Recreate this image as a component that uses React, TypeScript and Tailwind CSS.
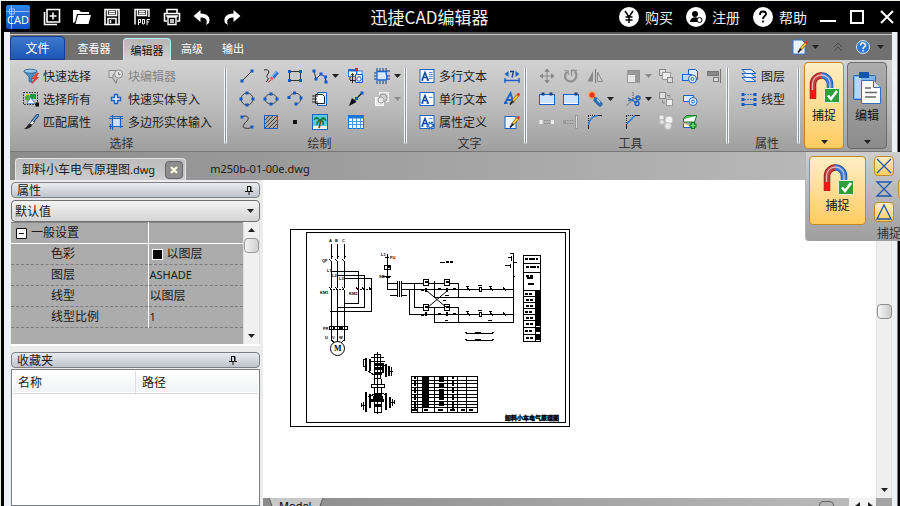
import type { ReactNode } from "react";

const BLUE = "#1c62c4";

const Svg = ({ children, size = 16 }: { children: ReactNode; size?: number }) => (
  <svg width={size} height={size} viewBox="0 0 16 16" fill="none" className="shrink-0">
    {children}
  </svg>
);

// small square grips used on most of the drawing icons
const Grips = ({ at, color = "#1559c8" }: { at: number[][]; color?: string }) => (
  <>
    {at.map(([x, y]) => (
      <rect key={`${x}-${y}`} x={x - 1.5} y={y - 1.5} width="3" height="3" fill={color} />
    ))}
  </>
);

const Pencil = () => (
  <>
    <path d="M14.5 3.5 8 11" stroke="#a8701a" strokeWidth="3" />
    <path d="M14.5 3.5 8 11" stroke="#ffd23c" strokeWidth="1.6" />
    <path d="M9.2 9.6 6 13.5" stroke="#222" strokeWidth="1.8" />
    <path d="m13.5 4.6 1.8-2" stroke="#d33" strokeWidth="2.4" />
  </>
);

const TextPage = ({ lines }: { lines: number[] }) => (
  <>
    <rect x="1" y="1.5" width="14" height="13" fill="#f6faff" stroke={BLUE} />
    <path d="M3 12 6 4.5 9 12M4 9.5h4M2.4 12h2M7.6 12h2.4" stroke="#1247a0" strokeWidth="1.5" />
    {lines.map((y) => (
      <path key={y} d={`M10 ${y}h3.5`} stroke="#4b8bdc" />
    ))}
  </>
);

const icons: Record<string, ReactNode> = {
  quickSelect: (
    <>
      <path d="M1 3.5 6 9v4.5l3 1V9l5-5.5z" fill="#4f8fc4" stroke="#215a8e" strokeWidth=".7" />
      <ellipse cx="7.5" cy="3.2" rx="6.5" ry="2" fill="#9cc9ea" stroke="#215a8e" strokeWidth=".8" />
      <path d="m14 5-5 5.5h2.5L9 15.5l6.5-6H13l2.5-4.5z" fill="#f2453a" stroke="#b61c16" strokeWidth=".5" />
    </>
  ),
  selectAll: (
    <>
      <rect x=".5" y="1.5" width="14" height="12" stroke="#222" strokeDasharray="1.5 1.2" />
      <rect x="2" y="3" width="7" height="7" fill="#ffd84a" />
      <rect x="7" y="3" width="6" height="5" fill="#1f9a3d" />
      <circle cx="5" cy="7" r="3" fill="#49a84a" />
      <path d="m4 12.5 3.500-6 4.500 6z" fill="#f2f8ff" stroke="#3b7bc8" strokeWidth=".7" />
      <rect x="12.5" y="11.5" width="3.5" height="4" fill="#111" />
    </>
  ),
  match: (
    <>
      <path d="m14.5 1.5-5 6" stroke="#12386c" strokeWidth="3.2" strokeLinecap="round" />
      <path d="m15 1-5.5 6.5" stroke="#7fb0e6" strokeWidth="1.2" />
      <path d="m9.5 6.5 2 2L9 11 6.500 9.500z" fill="#e9e9e9" stroke="#333" strokeWidth=".6" />
      <path d="M7 9.5c-2 0-2 3-6 5.500 4 0 7.500-1.500 8-4z" fill="#222" />
    </>
  ),
  blockEdit: (
    <>
      <path d="M1 2.5h9v4H5v3H1z" fill="#d8d8d8" stroke="#8c8c8c" />
      <circle cx="10.5" cy="6" r="4" fill="#e6e6e6" stroke="#8c8c8c" />
      <path d="m4 9 4 6 1.5-4M10.5 4v2.5h2" stroke="#8c8c8c" strokeWidth="1.3" />
    </>
  ),
  plus: <path d="M6.5 3.500h3v3h3v3h-3v3h-3v-3h-3v-3h3z" fill="#eaf3ff" stroke={BLUE} strokeWidth="1.4" />,
  polyIn: (
    <>
      <rect x="4.5" y="4.5" width="8" height="8" fill="#cfe0f8" />
      <path d="M1 4.500h14M1 12.500h14M4.500 1v15M12.500 2v12M2 2.500h13M2.500 10v5" stroke={BLUE} strokeWidth="1.2" />
    </>
  ),
  line: (
    <>
      <path d="M3 13 13 3" stroke="#333" />
      <Grips at={[[3, 13], [13, 3]]} />
    </>
  ),
  sketch: (
    <>
      <path d="M1 2c4-1 6 1 4 4s-1 3 0 4-1 3-2 4" stroke="#222" />
      <path d="m14.5 4-4.500 5.500" stroke="#2a76d8" strokeWidth="3.6" />
      <path d="M13.500 3.500 9 9" stroke="#9ccaff" />
      <path d="m9.5 9.500-1.500 2" stroke="#e55" strokeWidth="3" />
      <path d="M5 14.500 8 12" stroke="#a33" />
    </>
  ),
  rect: (
    <>
      <rect x="2.5" y="3.5" width="11" height="9" stroke="#333" />
      <Grips at={[[2.5, 3.5], [13.5, 3.5], [2.5, 12.5], [13.5, 12.5]]} />
    </>
  ),
  polyline: (
    <>
      <path d="m2 3 2 8 5-5 4 3 1 5" stroke="#333" />
      <Grips at={[[2, 3], [4, 11], [9, 6], [13.5, 9], [14, 14]]} />
    </>
  ),
  insert: (
    <>
      <rect x=".5" y="1.5" width="8" height="7" fill="#fff" stroke="#3a78c8" />
      <path d="M.5 2.500h8" stroke={BLUE} strokeWidth="2" />
      <rect x="9" y="3" width="5" height="4" fill="#fff" stroke="#3a78c8" />
      <rect x="7" y="0" width="3" height="3" fill="#d22" />
      <path d="M7.500 6.500h7v8h-7z" fill="#dcecff" stroke={BLUE} />
      <circle cx="11" cy="11" r="2.2" stroke={BLUE} fill="#fff" />
      <path d="M4.500 6v9M2 12.500h6M3 7.500l1.500-2 1.500 2M2 9v3" stroke="#222" />
    </>
  ),
  region: (
    <>
      <path d="M3 3.500h9.500c-2 3 2 3 0 8.500H3z" fill="#d9eaff" stroke={BLUE} strokeWidth="1.3" />
      <path d="M3 0v3M6 0v3M9 0v3M12 0v3M3 13v3M6 13v3M9 13v3M12 13v3M0 5h2.500M0 8h2.500M0 11h2.500M13 3h3M13 8h3M13 11h3" stroke="#123e80" />
    </>
  ),
  circle: (
    <>
      <circle cx="8" cy="8" r="6" stroke="#444" />
      <Grips at={[[8, 2], [8, 14], [2, 8], [14, 8]]} />
    </>
  ),
  ellipse: (
    <>
      <ellipse cx="8" cy="8" rx="6" ry="5" stroke="#444" />
      <Grips at={[[8, 3], [8, 13], [2, 8], [14, 8]]} />
    </>
  ),
  arc: (
    <>
      <path d="M2 7c1-6 11-7 12 0 0 4-3 6-5 6" stroke="#444" />
      <Grips at={[[2, 6.5], [7.5, 2], [14, 7], [9, 13]]} />
    </>
  ),
  wipeout: (
    <>
      <path d="M5.500 1.500h9v13h-9z" fill="#dcecff" stroke={BLUE} />
      <path d="M3.500 3.500h7l2 2v7h-9z" fill="#fff" stroke="#222" />
      <path d="M0 5h6M0 8h5M0 11h6" stroke="#222" />
    </>
  ),
  arrow: (
    <>
      <path d="M14 2 5 11" stroke="#222" strokeWidth="1.5" />
      <path d="m1 15 3-8 4.500 4z" fill="#111" />
      <Grips at={[[14, 2], [8.5, 7.5]]} />
    </>
  ),
  boundary: (
    <>
      <rect x="5.5" y="1.5" width="9" height="9" fill="#ddd" stroke="#eee" />
      <circle cx="9" cy="7" r="4" fill="#ccc" stroke="#999" />
      <rect x="1.5" y="6.5" width="8" height="8" fill="#e8e8e8" stroke="#fafafa" />
      <circle cx="7" cy="9" r="3" stroke="#999" />
    </>
  ),
  spline: (
    <>
      <path d="M3 3c5-3 8 1 5 4s-6 6-2 7 5 0 7-1" stroke="#333" />
      <Grips at={[[3, 3], [13, 13]]} />
    </>
  ),
  hatch: (
    <>
      <rect x="1.5" y="1.5" width="13" height="13" fill="#a8a8a8" stroke={BLUE} />
      <path d="M2 6 6 2M2 10l8-8M2 14 14 2M6 14l8-8M10 14l4-4" stroke="#444" />
    </>
  ),
  point: <rect x="6" y="6" width="4" height="4" fill="#111" />,
  image: (
    <>
      <rect x=".5" y=".5" width="15" height="15" fill="#5ccbe8" stroke={BLUE} />
      <path d="M1 12h14v3H1z" fill="#f2f4e0" />
      <path d="M8 6c1 3 0 5-1 8" stroke="#6b4518" strokeWidth="1.6" />
      <path d="M8 6C5 1 2 4 2 6c2-2 4-1 6 0-2 0-4 2-3 5 1-3 2-4 3-5 1 1 3 2 3 5 2-3 0-5-3-5 2-1 4-1 6 1 0-4-4-5-6-1z" fill="#14853a" stroke="#0d6a2b" strokeWidth=".6" />
    </>
  ),
  grid: (
    <>
      <rect x=".5" y="1.5" width="15" height="13" fill="#fff" stroke="#1c74d8" />
      <path d="M1 3h14" stroke="#1c74d8" strokeWidth="3" />
      <path d="M1 7.500h14M1 10.500h14M4.500 4v11M8.500 4v11M12.500 4v11" stroke="#4a94e4" />
    </>
  ),
  mtext: <TextPage lines={[4.5, 6.5, 8.5, 10.5]} />,
  stext: <TextPage lines={[6.5]} />,
  attr: (
    <>
      <TextPage lines={[4.5]} />
      <circle cx="11.5" cy="11.5" r="3" fill="#d9e9ff" stroke={BLUE} strokeWidth="2" strokeDasharray="1.6 .8" />
      <circle cx="11.5" cy="11.5" r="2" fill="#fff" stroke={BLUE} />
    </>
  ),
  dim: (
    <>
      <path d="M0 12.500h16M1 10v5M15 10v5" stroke={BLUE} strokeWidth="1.3" />
      <path d="M4.500 3 .5 6l4 3zM11.500 3l4 3-4 3z" fill={BLUE} />
      <path d="M6 3.500h3.500L8 9.500" stroke="#123e80" strokeWidth="1.3" />
    </>
  ),
  textStyle: (
    <>
      <path d="M1 12 6.500 2l3 10M3 9h5.500M0 12h3.500" stroke={BLUE} strokeWidth="1.8" />
      <Pencil />
    </>
  ),
  textEdit: (
    <>
      <rect x="1" y="2.5" width="11" height="12" fill="#eef5ff" stroke={BLUE} />
      <Pencil />
    </>
  ),
  move: (
    <path d="M8 1v14M1 8h14M8 1 6 3.500h4zM8 15l-2-2.500h4zM1 8l2.500-2v4zM15 8l-2.500-2v4z" stroke="#888" fill="#999" />
  ),
  rotate: (
    <>
      <path d="M4.500 3.500c-4 4-3 9 2.500 10 6 0 8-6 5-10" stroke="#909090" strokeWidth="2.2" />
      <path d="M8.500 8V2.500H14" stroke="#909090" strokeWidth="1.3" />
      <path d="M1 2.500h4.500V7" stroke="#a0a0a0" />
    </>
  ),
  mirror: (
    <>
      <path d="M6 3v10.500H.5z" fill="#888" />
      <path d="M10.500 4v9.500h5z" fill="#ccc" stroke="#888" />
      <path d="M8.500 1v14" stroke="#777" />
    </>
  ),
  scale: (
    <>
      <rect x="2.5" y="2.5" width="12" height="12" fill="#ccc" stroke="#777" strokeDasharray="1 1" />
      <path d="M3 2h12v12h-4V6H3z" fill="#8c8c8c" opacity=".8" />
      <rect x="2.5" y="6.5" width="8" height="8" fill="#e4e4e4" stroke="#999" />
    </>
  ),
  copyGray: (
    <>
      <rect x="1.5" y="1.5" width="6" height="6" fill="#ddd" stroke="#888" />
      <rect x="4.5" y="4.500" width="8" height="7" fill="#eee" stroke="#999" />
      <rect x="9.5" y="9.500" width="5" height="5" fill="#ddd" stroke="#888" />
    </>
  ),
  union: (
    <>
      <path d="M6.500 1.500h7l2 2v8h-9z" fill="#dcecff" stroke={BLUE} />
      <rect x=".5" y="6.5" width="9" height="6" fill="#b9d5f8" stroke={BLUE} />
      <circle cx="10.5" cy="11" r="4" fill="#eaf3ff" stroke={BLUE} />
      <circle cx="10.5" cy="11" r="1.500" stroke={BLUE} />
    </>
  ),
  align: (
    <>
      <path d="M14.500 1v14" stroke="#777" />
      <rect x="1.5" y="3.5" width="11" height="4" fill="#888" stroke="#777" />
      <rect x="7.5" y="9.5" width="5" height="4" fill="#ddd" stroke="#777" />
    </>
  ),
  stretch: (
    <>
      <rect x=".5" y="3.5" width="15" height="10" fill="#cfe3ff" stroke={BLUE} />
      <path d="M1 12.500h14" stroke="#fff" />
      <Grips at={[[4, 3], [12, 3]]} color="#123e80" />
    </>
  ),
  stretch2: (
    <>
      <rect x=".5" y="3.5" width="15" height="10" fill="#cfe3ff" stroke={BLUE} />
      <path d="M1 12.500h14" stroke="#fff" />
      <Grips at={[[13, 3]]} color="#123e80" />
    </>
  ),
  explode: (
    <>
      <circle cx="5" cy="4" r="4" fill="#f3a060" />
      <circle cx="5" cy="4" r="2.5" fill="#e8301c" />
      <path d="m6 5 3 3" stroke="#d22" />
      <path d="m9 9 4 4" stroke="#2b6cae" strokeWidth="5" strokeLinecap="round" />
      <path d="m10 8 3 3.500" stroke="#a9d6f5" strokeWidth="1.5" />
    </>
  ),
  trim: (
    <>
      <path d="M8 1v8L1 15" stroke="#555" strokeDasharray="1.5 1" />
      <path d="m3 7 9 5M3 10l11-4" stroke="#2c62ae" strokeWidth="1.3" />
      <circle cx="13" cy="7" r="2" stroke={BLUE} strokeWidth="1.4" />
      <circle cx="12" cy="12.5" r="2" stroke={BLUE} strokeWidth="1.4" />
    </>
  ),
  order: (
    <>
      <rect x="1.5" y="1.5" width="6" height="6" fill="#ddd" stroke="#888" />
      <rect x="8.5" y="8.5" width="6" height="6" fill="#eee" stroke="#999" />
      <path d="M9 4.500h3V7M4.500 9v3H7" stroke="#888" />
    </>
  ),
  subtract: (
    <>
      <path d="M1.500 4.500h10v6h-10z" fill="#dcecff" stroke={BLUE} />
      <circle cx="11" cy="10.5" r="4" fill="#eaf3ff" stroke={BLUE} />
      <circle cx="11" cy="10.5" r="1.500" stroke={BLUE} />
    </>
  ),
  breakOne: (
    <>
      <rect x=".5" y="6" width="3" height="4" fill="#eee" />
      <rect x="12" y="6" width="3" height="4" fill="#eee" />
      <path d="M5 6.500h6M5 9.500h6" stroke="#888" strokeDasharray="1.5 1" />
    </>
  ),
  extend: (
    <>
      <rect x="0" y="6" width="3" height="4" fill="#999" />
      <path d="M4 6.500h7M4 9.500h7" stroke="#888" strokeDasharray="1.5 1" />
      <rect x="12.5" y="1.5" width="2" height="13" fill="#ddd" stroke="#999" />
    </>
  ),
  fillet: (
    <>
      <path d="M1.500 15V2M1 1.500h14" stroke="#222" strokeDasharray="1 1" />
      <path d="M1.500 15v-4M11 1.500h4" stroke="#222" />
      <path d="M1.500 11c1-6 4-9 9.500-9.500" stroke="#2b78d8" strokeWidth="1.4" />
    </>
  ),
  chamfer: (
    <>
      <path d="M1.500 15V2M1 1.500h14" stroke="#222" strokeDasharray="1 1" />
      <path d="M1.500 15v-5M9 1.500h6" stroke="#222" />
      <path d="M1.500 10 10 1.500" stroke="#2b78d8" strokeWidth="1.4" />
    </>
  ),
  group: (
    <>
      <rect x="1" y="1" width="5" height="5" rx="1" fill="#eee" stroke="#aaa" />
      <circle cx="11" cy="6" r="4" fill="#f2f2f2" stroke="#bbb" />
      <circle cx="10" cy="12" r="3.5" fill="#e5e5e5" stroke="#bbb" />
      <circle cx="4" cy="8" r="2.5" fill="#ddd" stroke="#bbb" />
    </>
  ),
  addLayer: (
    <>
      <path d="m1.500 4.500 3-3h10l-2 3z" fill="#4fbf5c" stroke="#157a2b" />
      <path d="M1.500 5v3h11l2-6" fill="#fff" stroke="#157a2b" />
      <path d="M1.500 9.500v4h10" fill="#fff" stroke="#1c62c4" />
      <path d="M11 8v7M7.500 11.500h7" stroke="#0c7a22" strokeWidth="4" />
      <path d="M11 9v5M8.500 11.500h5" stroke="#6ee07c" strokeWidth="1.6" />
    </>
  ),
  layers: (
    <>
      {[10, 6, 2].map((y) => (
        <path key={y} d={`M1 ${y - 0.5}h9l5 4H5z`} fill="#e4f0ff" stroke={BLUE} />
      ))}
    </>
  ),
  lineType: (
    <>
      <path d="M1 3.500h14M1 8.500h14" stroke={BLUE} strokeDasharray="1.5 1.2" />
      <path d="M1 13.500h14" stroke={BLUE} />
      <Grips at={[[2, 3.5], [14, 3.5], [2, 8.5], [14, 8.5], [2, 13.5], [14, 13.5]]} />
    </>
  ),
};

const Caret = ({ muted = false }: { muted?: boolean }) => (
  <svg width="7" height="4" viewBox="0 0 7 4" className="shrink-0">
    <path d="M0 0h7L3.500 4z" fill={muted ? "#8a8a8a" : "#222"} />
  </svg>
);

const ToolButton = ({ icon, label, disabled }: { icon: string; label: string; disabled?: boolean }) => (
  <button
    disabled={disabled}
    className="flex h-[23px] items-center gap-1 whitespace-nowrap text-xs leading-4 text-[#1d1d1d] disabled:text-[#858585]"
  >
    <Svg>{icons[icon]}</Svg>
    {label}
  </button>
);

const IconButton = ({ icon, caret, muted }: { icon: string; caret?: boolean; muted?: boolean }) => (
  <button aria-label={icon} className="flex h-[23px] items-center gap-1 pl-1">
    <Svg>{icons[icon]}</Svg>
    {caret && <Caret muted={muted} />}
  </button>
);

const Group = ({ title, children }: { title: string; children: ReactNode }) => (
  <section className="flex shrink-0">
    <div className="flex flex-col">
      <div className="pt-1">{children}</div>
      <h2 className="pl-2 text-center text-xs leading-5 text-[#333]">{title}</h2>
    </div>
    <div className="my-[7px] w-[3px] rounded border-x border-[#f2f4f8] bg-[#8f949c]" />
  </section>
);

const Magnet = () => (
  <svg width="32" height="32" viewBox="0 0 32 32" fill="none">
    <path d="M5 28V13a8.500 8.500 0 0 1 8.500-8.500" stroke="#8c1414" strokeWidth="6.500" />
    <path d="M13 4.500a8.500 8.500 0 0 1 9 8.500v7" stroke="#1c4f9c" strokeWidth="6.500" />
    <path d="M5 27.500V13a8.500 8.500 0 0 1 8.500-8.500" stroke="#c43c3c" strokeWidth="5" />
    <path d="M13 4.500a8.500 8.500 0 0 1 9 8.500v7" stroke="#3f7fd6" strokeWidth="5" />
    <path d="M5 19v8.500" stroke="#ff1414" strokeWidth="5" />
    <path d="M4.500 19v-6a9 9 0 0 1 9-9 8.500 8.500 0 0 1 8.500 9v4" stroke="#f3d6da" strokeWidth="1.300" opacity=".8" />
    <rect x="16.5" y="17.5" width="15" height="14" rx="1" fill="#2f9e3a" stroke="#e4f3dc" />
    <path d="m20 24.500 3 3.500 6-8" stroke="#fff" strokeWidth="2.6" />
  </svg>
);

const Clipboard = () => (
  <svg width="30" height="34" viewBox="0 0 30 34" fill="none">
    <rect x="1.5" y="4.5" width="22" height="24" rx="1" fill="#7fb4ee" stroke="#2a64b4" />
    <path d="M3 6h6v21H3z" fill="#b4d6fa" />
    <rect x="7" y="1" width="10" height="6" fill="#1253b4" />
    <path d="M9.500 9.500h12l7 7v16h-19z" fill="#fff" stroke="#3a6eb4" />
    <path d="M21.500 9.500v7h7" fill="#d4e6fa" stroke="#3a6eb4" />
    <path d="M13 17h6M13 21.500h12M13 26h11" stroke="#666" strokeWidth="1.6" />
  </svg>
);

const quickActions: { name: string; icon: ReactNode }[] = [
  {
    name: "新建",
    icon: (
      <>
        <path d="M4 1.500h12.500V14H4z" stroke="#fff" strokeWidth="1.6" />
        <path d="M1.500 4v12.500H14M10 4.500v7M6.500 8h7" stroke="#fff" strokeWidth="1.6" />
      </>
    ),
  },
  {
    name: "打开",
    icon: <path d="M0 15V2h6l2 2h8v2H4L2 14zM5 7h13l-2.500 9h-13z" fill="#fff" />,
  },
  {
    name: "保存",
    icon: (
      <>
        <path d="M2 1.500h14v15H2z" stroke="#fff" strokeWidth="1.6" />
        <path d="M4.500 1v6.500h9V1M6 3.500h6M6 5.500h6M5 16v-5.500h8V16M7.500 12v3" stroke="#fff" strokeWidth="1.5" />
      </>
    ),
  },
  {
    name: "导出",
    icon: (
      <>
        <path d="M2 16.500v-15h14V9M4.500 2v5.500h9V2M6 3.500h6M6 5.500h6" stroke="#fff" strokeWidth="1.5" />
        <path d="M5.500 17v-5.500h2v3h-2M9.500 11.500V16H11l.5-1v-3.500zM14 17v-5.500h3M14 14h2" stroke="#fff" />
      </>
    ),
  },
  {
    name: "打印",
    icon: (
      <>
        <path d="M4 5V1.500h10V5M4 13H1.500V5.500h15V13H14" stroke="#fff" strokeWidth="1.6" />
        <path d="M5 9h8v7.500H5zM3 8h12M7 12h4M7 14h4" stroke="#fff" strokeWidth="1.4" />
      </>
    ),
  },
  { name: "撤销", icon: <path d="M7.500 2v3.500c7 0 10.500 4 8.500 9.500l-3 2c2-5 0-7.500-5.500-7.500V14L.5 8z" fill="#fff" /> },
  { name: "重做", icon: <path d="M10.500 2v3.500C3.500 5.500 0 9.500 2 15l3 2c-2-5 0-7.500 5.500-7.500V14l7-6z" fill="#fff" /> },
];

const accountLinks: { label: string; icon: ReactNode }[] = [
  { label: "购买", icon: <path d="m6 4 4 6 4-6M10 10v6M6.500 10h7M6.500 13h7" stroke="#000" strokeWidth="1.5" /> },
  {
    label: "注册",
    icon: (
      <>
        <circle cx="9" cy="7" r="3" fill="#000" />
        <path d="M4 15c0-6 9-6 9-2v2z" fill="#000" />
        <circle cx="13.5" cy="13" r="2.5" fill="#fff" stroke="#000" />
      </>
    ),
  },
  { label: "帮助", icon: <path d="M7 8c0-5 6-4 6-1 0 2-3 2-3 5M10 13.500v2" stroke="#000" strokeWidth="1.8" /> },
];

const TitleBar = () => (
  <header className="relative flex h-[31px] shrink-0 items-center justify-between bg-black pl-[5px] text-[#f2f2f2]">
    <div className="flex items-center">
      <svg width="24" height="24" viewBox="0 0 24 24" className="mr-[13px]">
        <defs>
          <linearGradient id="logo" x1="0" y1="0" x2="0" y2="1">
            <stop stopColor="#2b86ea" />
            <stop offset="1" stopColor="#1450c0" />
          </linearGradient>
        </defs>
        <rect width="24" height="24" rx="2" fill="url(#logo)" />
        <path d="M5.500 0v24M0 6.500h23M3.500 4h5v5h-5z" stroke="#a8d0ff" strokeWidth=".8" fill="none" />
        <text x="12" y="19" textAnchor="middle" fill="#fff" fontSize="11" fontFamily="Open Sans">CAD</text>
      </svg>
      <nav className="flex items-center gap-3">
        {quickActions.map((a) => (
          <button key={a.name} aria-label={a.name}>
            <svg width="18" height="18" viewBox="0 0 18 18" fill="none">{a.icon}</svg>
          </button>
        ))}
      </nav>
    </div>
    <h1 className="pointer-events-none absolute inset-x-0 mr-[42px] text-center text-[17px] leading-6">迅捷CAD编辑器</h1>
    <div className="flex items-center">
      {accountLinks.map((l) => (
        <a key={l.label} href="#" className="mr-[13px] flex items-center gap-1.5 text-sm leading-5">
          <svg width="20" height="20" viewBox="0 0 20 20" fill="none">
            <circle cx="10" cy="10" r="10" fill="#fff" />
            {l.icon}
          </svg>
          {l.label}
        </a>
      ))}
      <div className="flex items-center pr-1.5">
        <button aria-label="最小化" className="mr-3.5">
          <svg width="16" height="16"><path d="M0 11h16v2H0z" fill="#fff" /></svg>
        </button>
        <button aria-label="最大化" className="mr-4">
          <svg width="14" height="14"><path d="M1 1h12v12H1z" stroke="#fff" strokeWidth="2" fill="none" /></svg>
        </button>
        <button aria-label="关闭">
          <svg width="14" height="14"><path d="m1 1 12 12M13 1 1 13" stroke="#fff" strokeWidth="2" /></svg>
        </button>
      </div>
    </div>
  </header>
);

const MenuTabs = () => (
  <nav className="flex h-7 shrink-0 items-end border-t-2 border-[#555] bg-[#707070] text-[11px] leading-4 text-white shadow-[inset_0_1px_0_#c8c8c8]">
    <button className="h-6 w-[55px] rounded-t border border-[#173f8c] bg-linear-to-b from-[#3f78cc] to-[#1d56b4] text-xs">文件</button>
    <button className="h-6 w-[58px]">查看器</button>
    <button className="h-[22px] w-12 rounded-t-sm border border-b-0 border-[#b9f0f4] bg-linear-to-b from-[#b4b4b4] to-[#d2d2d2] text-[#111]">编辑器</button>
    <button className="h-6 w-[42px]">高级</button>
    <button className="h-6 w-10">输出</button>
    <div className="ml-auto flex h-[26px] items-center pr-2">
      <button aria-label="样式" className="mr-3.5 flex items-center gap-1">
        <Svg>
          <path d="M1 1h9l3 3v11H1z" fill="#e8f2ff" stroke="#3a78c8" />
          <Pencil />
        </Svg>
        <Caret />
      </button>
      <button aria-label="收起" className="mr-3">
        <svg width="10" height="10" fill="none"><path d="m1 5 4-4 4 4M1 9l4-4 4 4" stroke="#484848" /></svg>
      </button>
      <button aria-label="帮助" className="flex items-center gap-1.5">
        <Svg>
          <circle cx="8" cy="8" r="6.5" fill="#2d78d0" stroke="#d6e8ff" />
          <path d="M5.500 6.500c0-4 5-3 5 0 0 1.500-2.500 1.500-2.500 3.500M8 11v1.500" stroke="#fff" strokeWidth="1.5" />
        </Svg>
        <Caret />
      </button>
    </div>
  </nav>
);

const Ribbon = () => (
  <div className="flex h-[92px] shrink-0 overflow-hidden border-b border-[#777] bg-linear-to-b from-[#d2d2d2] via-[#bcbcbc] to-[#9f9f9f] pl-px">
    <Group title="选择">
      <div className="grid grid-cols-[85px_116px] pl-3">
        <ToolButton icon="quickSelect" label="快速选择" />
        <ToolButton icon="blockEdit" label="块编辑器" disabled />
        <ToolButton icon="selectAll" label="选择所有" />
        <ToolButton icon="plus" label="快速实体导入" />
        <ToolButton icon="match" label="匹配属性" />
        <ToolButton icon="polyIn" label="多边形实体输入" />
      </div>
    </Group>
    <Group title="绘制">
      <div className="grid grid-cols-[24px_24px_25px_36px_26px_34px] pl-2">
        <IconButton icon="line" />
        <IconButton icon="sketch" />
        <IconButton icon="rect" />
        <IconButton icon="polyline" caret />
        <IconButton icon="insert" />
        <IconButton icon="region" caret />
        <IconButton icon="circle" />
        <IconButton icon="ellipse" />
        <IconButton icon="arc" />
        <IconButton icon="wipeout" />
        <IconButton icon="arrow" />
        <IconButton icon="boundary" caret muted />
        <IconButton icon="spline" />
        <IconButton icon="hatch" />
        <IconButton icon="point" />
        <IconButton icon="image" />
        <IconButton icon="grid" />
      </div>
    </Group>
    <Group title="文字">
      <div className="grid grid-cols-[81px_24px] pl-3">
        <ToolButton icon="mtext" label="多行文本" />
        <IconButton icon="dim" />
        <ToolButton icon="stext" label="单行文本" />
        <IconButton icon="textStyle" />
        <ToolButton icon="attr" label="属性定义" />
        <IconButton icon="textEdit" />
      </div>
    </Group>
    <Group title="工具">
      <div className="grid grid-cols-[24px_24px_38px_33px_24px_24px_24px] pl-2">
        <IconButton icon="move" />
        <IconButton icon="rotate" />
        <IconButton icon="mirror" />
        <IconButton icon="scale" caret muted />
        <IconButton icon="copyGray" />
        <IconButton icon="union" />
        <IconButton icon="align" />
        <IconButton icon="stretch" />
        <IconButton icon="stretch2" />
        <IconButton icon="explode" caret />
        <IconButton icon="trim" caret />
        <IconButton icon="order" />
        <IconButton icon="subtract" />
        <span />
        <IconButton icon="breakOne" />
        <IconButton icon="extend" />
        <IconButton icon="fillet" />
        <IconButton icon="chamfer" />
        <IconButton icon="group" />
        <IconButton icon="addLayer" />
      </div>
    </Group>
    <Group title="属性">
      <div className="flex h-[69px] flex-col px-3">
        <ToolButton icon="layers" label="图层" />
        <ToolButton icon="lineType" label="线型" />
      </div>
    </Group>
    <div className="flex gap-[3px] py-0.5 pl-1 text-xs leading-4 text-[#111]">
      <button className="flex w-10 flex-col items-center rounded border border-[#c08a2c] bg-linear-to-b from-[#fdeec4] to-[#ffcb5e] pt-2 pb-1">
        <Magnet />
        <span className="mt-1">捕捉</span>
        <span className="mt-auto"><Caret /></span>
      </button>
      <button className="flex w-10 flex-col items-center rounded border border-[#6c6c6c] bg-linear-to-b from-[#adadad] to-[#8b8b8b] pt-2 pb-1">
        <Clipboard />
        <span className="mt-0.5">编辑</span>
        <span className="mt-auto"><Caret /></span>
      </button>
    </div>
  </div>
);

const snapModes = [
  { name: "交点", on: true, path: "M2 2l14 14M16 2 2 16" },
  { name: "最近点", on: false, path: "M2 2h14L2 16h14z" },
  { name: "中点", on: true, path: "M9 2 2 16h14z" },
];

const SnapMenu = () => (
  <div className="absolute top-[151px] right-0 w-[95px] overflow-hidden rounded-bl border-l border-[#b4b4b4] bg-linear-to-b from-[#cecece] to-[#9e9e9e] pt-1 pl-[3px] text-xs leading-4">
    <div className="flex gap-2">
      <button className="flex h-[69px] w-[57px] shrink-0 flex-col items-center rounded-sm border border-[#c08a2c] bg-linear-to-b from-[#fdeec4] to-[#ffcb5e] pt-1.5 text-[#111]">
        <Magnet />
        <span className="mt-0.5">捕捉</span>
      </button>
      <div className="grid h-[66px] shrink-0 grid-cols-[20px_20px] gap-x-1 gap-y-[3px]">
        {snapModes.map((m) => (
          <div key={m.name} className="contents">
            <button
              aria-label={m.name}
              className={
                m.on
                  ? "flex h-5 items-center justify-center rounded-sm border border-[#c08a2c] bg-linear-to-b from-[#fdeec4] to-[#ffcb5e]"
                  : "flex h-5 items-center justify-center"
              }
            >
              <svg width="18" height="18" viewBox="0 0 18 18" fill="none">
                <path d={m.path} stroke="#1c58b0" strokeWidth="1.3" />
              </svg>
            </button>
            <span className={m.on ? "" : "rounded-sm border border-[#c08a2c] bg-[#ffcb5e]"} />
          </div>
        ))}
      </div>
    </div>
    <p className="pl-[68px] whitespace-nowrap text-[#333]">捕捉</p>
  </div>
);

const DocTabs = () => (
  <div className="flex h-7 shrink-0 items-end bg-linear-to-r from-[#8c8c8c] to-[#bdbdbd] pl-[5px] font-['Noto_Sans','Noto_Sans_CJK_SC',sans-serif] text-xs leading-4 text-[#1b1b1b]">
    <div className="flex h-[22px] items-center gap-2.5 rounded-t-sm border border-b-0 border-[#e4e4e4] bg-linear-to-b from-[#bcbcbc] to-[#cdcdcd] pr-0.5 pl-1.5">
      <a href="#" className="whitespace-nowrap">卸料小车电气原理图<span className="text-[11px]">.dwg</span></a>
      <button aria-label="关闭" className="flex size-[18px] items-center justify-center rounded border border-[#666] bg-[#8e8e8e]">
        <svg width="8" height="8"><path d="m1 1 6 6M7 1 1 7" stroke="#fffbe0" strokeWidth="2.2" /></svg>
      </button>
    </div>
    <a href="#" className="flex h-[22px] items-center pl-6 text-[11px]">m250b-01-00e.dwg</a>
  </div>
);

const PanelTitle = ({ title, menu }: { title: string; menu?: boolean }) => (
  <div className="flex h-4 items-center justify-between rounded-sm border border-[#7d8085] bg-linear-to-b from-[#e9ebee] to-[#bfc4cc] pr-1.5 pl-[5px]">
    <h2 className="text-xs leading-3 text-[#222]">{title}</h2>
    <button aria-label="固定" className={menu ? "mr-4" : ""}>
      <svg width="8" height="9" fill="none"><path d="M2 .5h4V5M2.500 0v5M0 5.500h8M4 6v3M5.500 0v5" stroke="#111" /></svg>
    </button>
  </div>
);

const properties = [
  { name: "色彩", value: "以图层", swatch: true },
  { name: "图层", value: "ASHADE" },
  { name: "线型", value: "以图层" },
  { name: "线型比例", value: "1" },
];

const Sidebar = () => (
  <aside className="flex w-[253px] shrink-0 flex-col border-r-[3px] border-[#ececec] bg-[#ececec] pt-0.5 pl-px text-xs text-[#1b1b1b]">
    <PanelTitle title="属性" />
    <div className="relative mt-0.5">
      <select
        aria-label="对象"
        className="h-[22px] w-full appearance-none rounded-sm border border-[#707070] bg-linear-to-b from-[#f4f4f4] to-[#d4d4d4] pl-[3px] text-xs leading-4"
      >
        <option>默认值</option>
      </select>
      <span className="pointer-events-none absolute top-0 right-1.5 flex h-full items-center"><Caret /></span>
    </div>
    <div className="flex border-b-2 border-white bg-[#acacac]">
      <table className="mb-4 w-full border-collapse border-t border-[#888] font-['Noto_Sans','Noto_Sans_CJK_SC',sans-serif]">
        <tbody>
          <tr className="h-[21px] border-b border-white">
            <th className="border-r border-white pl-[5px] text-left font-normal">
              <div className="flex items-center gap-1 leading-4">
                <svg width="11" height="11"><path d="M.5.5h10v10H.5zM3 5.500h5" stroke="#111" fill="#fff" /></svg>
                一般设置
              </div>
            </th>
            <td className="w-[95px]" />
          </tr>
          {properties.map((p) => (
            <tr key={p.name} className="h-[21px] border-b border-dashed border-[#7c7c7c]">
              <th className="border-r border-solid border-r-white pl-10 text-left leading-4 font-normal">{p.name}</th>
              <td>
                <div className="flex items-center gap-1 pl-px leading-4">
                  {p.swatch && <span className="ml-0.5 size-[11px] border border-white bg-black" />}
                  <span className={/[A-Z0-9]/.test(p.value) ? "text-[11px]" : ""}>{p.value}</span>
                </div>
              </td>
            </tr>
          ))}
        </tbody>
      </table>
      <div className="flex w-[17px] shrink-0 flex-col items-center border-x border-[#ddd] bg-[#f0f0f0] py-1.5">
        <span className="rotate-180"><Caret /></span>
        <div className="mt-1.5 h-[15px] w-[15px] rounded-sm border border-[#999] bg-linear-to-r from-[#f4f4f4] to-[#cfcfcf]" />
        <span className="mt-auto"><Caret /></span>
      </div>
    </div>
    <div className="mt-1.5">
      <PanelTitle title="收藏夹" menu />
    </div>
    <div className="mt-px grow border border-[#7d8085] bg-white px-px pt-px">
      <table className="w-full table-fixed">
        <thead>
          <tr className="h-[22px] border-b border-[#d5d5d5] bg-linear-to-b from-white to-[#f1f2f4] text-left leading-4">
            <th className="border-r border-[#dedede] pl-[5px] font-normal">名称</th>
            <th className="pl-1.5 font-normal">路径</th>
          </tr>
        </thead>
      </table>
    </div>
  </aside>
);

const legendRows = [255, 263, 272, 290, 296, 302, 308, 314, 320, 327, 334];
const partRows = [376, 380, 383, 387, 390, 394, 397, 401, 404, 407];

const Schematic = () => (
  <svg width="280" height="198" viewBox="290 229 280 198" fill="none" stroke="#000" shapeRendering="crispEdges">
    <path d="M290.500 229.500h279v197h-279zM306.500 232.500h259v190h-259z" />
    {/* main circuit */}
    {[331.5, 337.5, 344.5].map((x) => (
      <g key={x}>
        <path d={`M${x} 244v15M${x} 262v26M${x} 291v49M${x - 2} 259l2 3M${x - 2} 287l2 4M${x - 1} 256h2`} />
        <path d={`M${x} 340L${337.5 + (x - 337.5) / 2} 343`} />
      </g>
    ))}
    <path d="M331 271.500h27.500v32H344M337 275.500h27.500v32H337M344 278.500h27.500v33H330" />
    <path d="M330 289.500h15M357 289.500h14" strokeDasharray="2 1" />
    <path d="M356 287l2 3M362 287l2 3M369 287l2 3M329.500 326.500h18v3h-18z" />
    <path d="M334 326v3M340 326v3M342 326v3" strokeWidth="2" />
    <circle cx="337.5" cy="348.5" r="7" fill="#fff" shapeRendering="auto" />
    {/* control transformer */}
    <path d="M387.500 254v35M384.500 265.500h6v4h-6zM385 257h4M383 276h8M387 289.500h10M387 283.500h10M390 295.500h7M401 295.500h6M401 283.500h22M401 289.500h112" />
    <path d="M387 267h4M386 277h4" strokeWidth="2" />
    <path d="M397.500 281v16M399.500 281v16M401.500 281v16M409.500 289v25.500H513M414.500 283v24.500H434.500M434.500 283v6M434.500 307v15M428 283.500h30v14M428 307.500h30v15M434.500 281v16.500H513M434 322.500h79.500M513.500 253v70" />
    <path d="M423.500 279.500h5v6h-5zM444.500 279.500h5v6h-5zM423.500 304.500h5v6h-5zM444.500 304.500h5v6h-5z" fill="#fff" />
    <path d="M425 282h3M446 282h3M425 307h3M446 307h3M426 288v4M447 288v4M426 312v4M447 312v4M421 290h3M421 315h3" strokeWidth="2" />
    <path d="m427 291 20 17M447 291l-20 17" shapeRendering="auto" />
    {[289.5, 314.5].map((y) => (
      <g key={y}>
        <path d={`M467 ${y - 2}l3 3M490 ${y - 2}l3 3M503 ${y - 2}l3 3M438 ${y - 1}h3M453 ${y - 1}h3`} />
        <rect x="479.5" y={y - 2} width="2" height="4" fill="#fff" />
        <path d={`M478 ${y - 4}h4M466 ${y - 3}h3M489 ${y - 3}h3`} />
      </g>
    ))}
    <path d="M445 295.500h4M475 297h3M488 320.500h4M445 320.500h3M443 300.500h3M510 253.500h3M508 257.500h3M505 265.500h5M511.500 256v5M513 262.500h4M513 276.500h2M510.500 264v4" />
    <path d="M466 333.500h27M466 340.500h27" />
    <path d="M475 332.500h6M465 332.500h2M492 332.500h2M475 339.500h6M465 339.500h2M492 339.500h2M440 262.500h5" />
    <path d="M446 262h7" strokeWidth="2" strokeDasharray="3 1" />
    {/* legend */}
    <path d="M523.500 255.500h17v86h-17zM535.500 290v51" />
    {legendRows.map((y, i) => (
      <g key={y}>
        <path d={`M523 ${y + 0.5}h17`} />
        <path d={`M${i % 3 ? 526 : 525} ${y + 4}h${i < 2 ? 13 : 7}`} strokeWidth="2" strokeDasharray="3 .6" />
      </g>
    ))}
    <path d="M528 284h6M527 278h6" strokeWidth="2" />
    <path d="M538 291v35M538 328v4M538 335v6" strokeWidth="4" strokeDasharray="5 1" />
    {/* motor layout */}
    <path d="M377.500 352v62M374.500 354.500h6v24h-6zM371.500 384.500h13v3h-13zM374.500 388v24.500h7V388M374.500 379v5M381.500 379v5M371 357.500h13M371 361.500h14" />
    <path d="M374 364h9M374 368h8M374 373h8M371 400h13M374 394h7M374 405h7M373 397h10" strokeWidth="3" />
    <path d="M366 358v13M370 359v12M386 364v13M389 366v10M383 363v10M366 392v20M370 394v14M386 393v17M390 397v11" strokeWidth="2" />
    <path d="M363.500 359v8M364 359.500h3M364 366.500h3M391.500 367v9M389 371.500h4M363.500 402v8M361 405.500h6M361 403v4M392.500 399v7M390 402.500h5M394.500 400v4M368 371l6 4M382 365h4M368 397l9-4M382 393l5 3" />
    {/* parts list */}
    <path d="M411.500 376.500h66v36h-66zM417.500 376v36M422.500 376v36M434.500 376v36M447.500 376v36M457.500 376v36M466.500 376v36" />
    {partRows.map((y) => (
      <g key={y}>
        <path d={`M411 ${y + 0.5}h66`} />
        <path d={`M414 ${y + 2}h2M452 ${y + 2}h2`} strokeWidth="2" />
      </g>
    ))}
    <path d="M426 377v31" strokeWidth="6" />
    <path d="M441 377v31" strokeWidth="5" strokeDasharray="5 1" />
    <path d="M412 410h5M424 410h4M438 410h5M450 410h5M461 410h4M469 410h4" strokeWidth="2" />
    <g fill="#000" stroke="none" fontFamily="Liberation Sans, Noto Sans CJK SC, sans-serif" fontSize="4" fontWeight="bold">
      <text x="329" y="242">A</text>
      <text x="335" y="242">B</text>
      <text x="342" y="242">C</text>
      <text x="322" y="262">QF</text>
      <text x="327" y="272">L1</text>
      <text x="332" y="277">L2</text>
      <text x="339" y="280">L3</text>
      <text x="320" y="294">KM1</text>
      <text x="349" y="295">KM2</text>
      <text x="323" y="330">FR</text>
      <text x="325" y="339">U</text>
      <text x="332" y="339">V</text>
      <text x="339" y="339">W</text>
      <text x="381" y="256">L1</text>
      <text x="390" y="259">FU</text>
      <text x="379" y="278">SB</text>
      <text x="334" y="351" fontSize="8" fontFamily="Liberation Serif, serif">M</text>
      <text x="505" y="420" fontSize="6" stroke="#000" strokeWidth=".4">卸料小车电气原理图</text>
    </g>
  </svg>
);

const Workspace = () => (
  <main className="flex min-w-0 grow flex-col bg-white">
    <div className="flex min-h-0 grow">
      <div className="min-w-0 grow overflow-hidden pt-[49px] pl-[27px]">
        <Schematic />
      </div>
      <div className="flex w-4 shrink-0 flex-col items-center border-x border-[#e2e2e2] bg-[#efefef] pb-1.5">
        <div className="mt-[124px] h-[15px] w-[15px] shrink-0 rounded-sm border border-[#8c8c8c] bg-linear-to-r from-[#f8f8f8] to-[#cccccc]" />
        <span className="mt-auto"><Caret /></span>
      </div>
    </div>
    <div className="flex h-2 shrink-0 overflow-hidden bg-linear-to-r from-[#8c8c8c] to-[#bdbdbd] font-['Noto_Sans',sans-serif] text-[11px] leading-4">
      <button className="flex h-4 items-start pl-1.5">
        <svg width="8" height="16"><path d="M0 0h8v16H6z" fill="#c8c8c8" /><path d="m0 0 6 16" stroke="#555" /></svg>
        <span className="bg-[#c8c8c8] px-0.5">Model</span>
        <svg width="10" height="16"><path d="M0 0h10L4 16H0z" fill="#c8c8c8" /><path d="M10 0 4 16" stroke="#555" /></svg>
      </button>
      <div className="mt-[3px] mr-[15px] ml-auto h-4 w-[15px] rounded border border-[#666] bg-[#b4b4b4]" />
      <div className="flex h-4 w-[27px] gap-2 bg-[#f2f2f2] pt-1 pl-1.5">
        <svg width="5" height="8"><path d="M5 0v8L0 4z" fill="#222" /></svg>
        <svg width="5" height="8"><path d="M0 0v8l5-4z" fill="#222" /></svg>
      </div>
      <div className="w-4 bg-[#a4a4a4]" />
    </div>
  </main>
);

const App = () => {
  return (
    <div className="relative flex h-screen flex-col overflow-hidden border-t border-l border-[#e8f0e4] bg-black font-['Noto_Sans_CJK_SC',sans-serif]">
      <TitleBar />
      <div className="flex min-h-0 grow pr-0.5 pl-[3px]">
        <div className="w-1.5 shrink-0 bg-[#eef2f8]" />
        <div className="flex min-w-0 grow flex-col">
          <MenuTabs />
          <Ribbon />
          <DocTabs />
          <div className="flex min-h-0 grow">
            <Sidebar />
            <Workspace />
          </div>
        </div>
        <div className="w-1.5 shrink-0 border-r border-[#777] bg-[#eef2f8]" />
      </div>
      <SnapMenu />
    </div>
  );
};

export default App;
